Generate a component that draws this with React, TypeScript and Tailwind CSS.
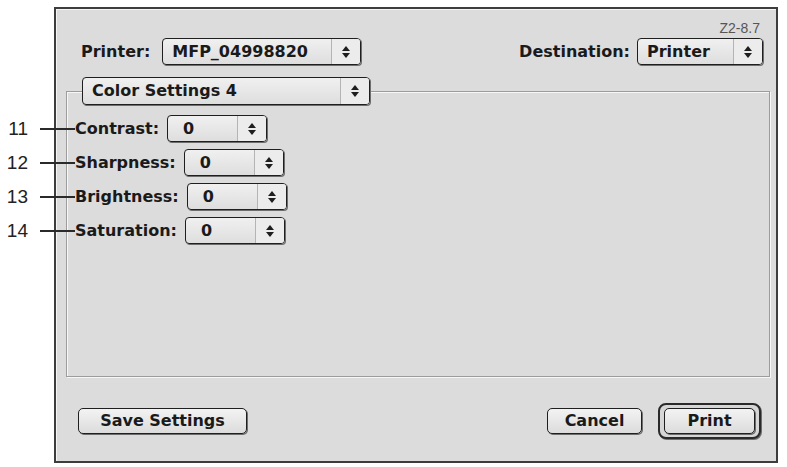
import type { ReactNode } from "react";

const chrome = { fontFamily: '"DejaVu Sans", "Liberation Sans", sans-serif' };

function Arrows() {
  return (
    <svg width="8" height="12" viewBox="0 0 8 12" className="block">
      <polygon points="4,0 8,5 0,5" fill="#1e1e1e" />
      <polygon points="0,7 8,7 4,12" fill="#1e1e1e" />
    </svg>
  );
}

function Popup({ value, width, inset = 9, h = 27 }: { value: string; width: number; inset?: number; h?: number }) {
  return (
    <div
      className="flex shrink-0 rounded-[4px] border border-[#1f1f1f] bg-gradient-to-b from-[#f0f0f0] to-[#dedede] shadow-[1px_1px_0_#6e6e6e]"
      style={{ width, height: h }}
    >
      <div className="flex flex-1 items-center text-[16px] font-bold text-[#1a1a1a]" style={{ paddingLeft: inset }}>
        {value}
      </div>
      <div className="flex w-[29px] items-center justify-center rounded-r-[3px] border-l border-[#b4b4b4] bg-[#ececec]">
        <Arrows />
      </div>
    </div>
  );
}

function Button({ children, width }: { children: ReactNode; width: number }) {
  return (
    <div
      className="flex h-[26px] items-center justify-center rounded-[5px] border border-[#1f1f1f] bg-gradient-to-b from-[#f3f3f3] to-[#dcdcdc] text-[16px] font-bold text-[#1a1a1a] shadow-[1px_1px_0_#6e6e6e]"
      style={{ width }}
    >
      {children}
    </div>
  );
}

const settings = [
  { n: "11", label: "Contrast:" },
  { n: "12", label: "Sharpness:" },
  { n: "13", label: "Brightness:" },
  { n: "14", label: "Saturation:" },
];

export default function App() {
  return (
    <div className="relative h-[467px] w-[787px] overflow-hidden bg-white" style={chrome}>
      <div className="ml-[54px] mt-[7px] flex h-[456px] w-[724px] flex-col border-2 border-[#3d3d3d] bg-[#dcdcdc] shadow-[inset_1px_1px_0_#f5f5f5]">
        <div
          className="pr-[16px] pt-[12px] text-right text-[14px] leading-[14px] text-[#555]"
          style={{ fontFamily: '"Liberation Sans", Arial, sans-serif' }}
        >
          Z2-8.7
        </div>

        <div className="mt-[3px] flex h-[27px] items-center justify-between pl-[25px] pr-[13px]">
          <div className="flex items-center gap-[12px]">
            <span className="text-[16px] font-bold text-[#1a1a1a]">Printer:</span>
            <Popup value="MFP_04998820" width={199} />
          </div>
          <div className="flex items-center gap-[7px]">
            <span className="text-[16px] font-bold text-[#1a1a1a]">Destination:</span>
            <Popup value="Printer" width={126} />
          </div>
        </div>

        <div className="ml-[10px] mr-[6px] mt-[12px] flex flex-col">
          <div className="relative z-10 ml-[16px]">
            <Popup value="Color Settings 4" width={288} h={28} />
          </div>
          <div className="-mt-[14px] h-[286px] border border-[#9c9c9c] shadow-[inset_1px_1px_0_#f7f7f7,1px_1px_0_#f7f7f7]">
            <div className="flex flex-col gap-[7px] pl-[8px] pt-[23px]">
              {settings.map((s) => (
                <div key={s.n} className="flex h-[27px] items-center gap-[8px]">
                  <span className="text-[16px] font-bold text-[#1a1a1a]">{s.label}</span>
                  <Popup value="0" width={100} inset={15} />
                </div>
              ))}
            </div>
          </div>
        </div>

        <div className="mt-[26px] flex h-[36px] items-center justify-between pl-[22px] pr-[15px]">
          <Button width={169}>Save Settings</Button>
          <div className="flex items-center gap-[16px]">
            <Button width={95}>Cancel</Button>
            <div className="flex h-[36px] w-[103px] items-center justify-center rounded-[8px] border-[2px] border-[#2a2a2a] bg-[#d6d6d6] shadow-[1px_1px_0_#6e6e6e]">
              <Button width={91}>Print</Button>
            </div>
          </div>
        </div>
      </div>

      {/* numbered callouts pointing at the colour setting rows */}
      <div
        className="absolute left-0 top-[115px] flex flex-col gap-[7px]"
        style={{ fontFamily: '"Liberation Sans", Arial, sans-serif' }}
      >
        {settings.map((s) => (
          <div key={s.n} className="flex h-[27px] items-center">
            <span className="w-[28px] text-right text-[19px] leading-none text-[#222]">{s.n}</span>
            <span className="ml-[12px] h-[2px] w-[35px] bg-[#2a2a2a]" />
          </div>
        ))}
      </div>
    </div>
  );
}
